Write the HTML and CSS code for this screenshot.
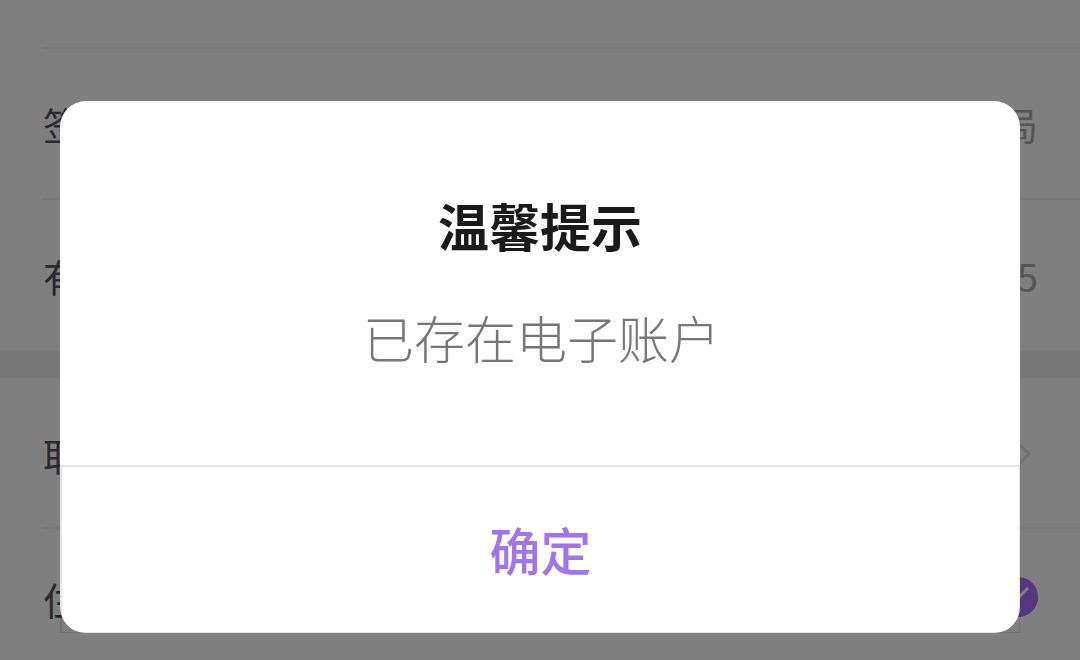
FILE: index.html
```html
<!DOCTYPE html>
<html lang="zh-CN">
<head>
    <meta charset="UTF-8">
    <title>温馨提示</title>
    <link rel="stylesheet" href="styles.css">
</head>
<body>
    <div class="page">
        <div class="group first">
            <div class="row">
                <span class="label">签</span>
                <span class="value">局</span>
            </div>
            <div class="row">
                <span class="label">有</span>
                <span class="value">5</span>
            </div>
        </div>
        <div class="group second">
            <div class="row">
                <span class="label">取</span>
                <svg class="chevron" width="14" height="24" viewBox="0 0 14 24">
                    <path d="M2 2l10 10L2 22" fill="none" stroke="#e2e2e2" stroke-width="3"/>
                </svg>
            </div>
            <div class="row">
                <span class="label">住</span>
                <svg class="check" width="40" height="40" viewBox="0 0 40 40">
                    <circle cx="20" cy="20" r="20" fill="#a86ff8"/>
                    <path d="M6 22l6 7L30 11" fill="none" stroke="#fff" stroke-width="3"/>
                </svg>
            </div>
        </div>
    </div>

    <div class="overlay">
        <div class="dialog">
            <div class="dialog-body">
                <h1 class="dialog-title">温馨提示</h1>
                <p class="dialog-msg">已存在电子账户</p>
            </div>
            <div class="dialog-footer">确定</div>
        </div>
    </div>
</body>
</html>
```

FILE: styles.css
```css
body {
    margin: 0;
    width: 1080px;
    height: 660px;
    overflow: hidden;
    font-family: "Noto Sans CJK SC", "Noto Sans", sans-serif;
    background-color: #fff;
}

.page {
    height: 660px;
    background-color: #fff;
}

.group {
    padding-left: 42px;
    background-color: #fff;
}

.group.first {
    padding-top: 47px;
    border-bottom: 27px solid #eee;
}

.row {
    display: flex;
    align-items: center;
    justify-content: space-between;
    height: 149px;
    padding-right: 42px;
    padding-left: 1px;
    border-top: 2px solid #f2f2f2;
}

.first .row:last-child {
    height: 151px;
}

.second .row:first-child {
    border-top: none;
    height: 146px;
    padding-top: 3px;
}

.second .row:last-child {
    height: 138px;
}

.label {
    font-size: 38px;
    font-weight: 400;
    color: #55535d;
}

.value {
    font-size: 38px;
    color: #aaa;
}

.check {
    margin-top: -2px;
}

.chevron {
    margin-right: 7px;
}

.overlay {
    position: fixed;
    top: 0;
    left: 0;
    width: 100%;
    height: 100%;
    display: flex;
    justify-content: center;
    padding-top: 101px;
    box-sizing: border-box;
    background-color: rgba(0, 0, 0, 0.5);
}

.dialog {
    display: flex;
    flex-direction: column;
    width: 960px;
    height: 532px;
    border-radius: 26px;
    background-color: #fff;
}

.dialog-body {
    height: 364px;
    text-align: center;
}

.dialog-title {
    margin: 0;
    padding-top: 88px;
    font-size: 51px;
    line-height: 72px;
    font-weight: 700;
    color: #1a1a1a;
}

.dialog-msg {
    margin: 0;
    padding: 40px 0 0 3px;
    font-size: 51px;
    line-height: 72px;
    font-weight: 300;
    color: #777;
}

.dialog-footer {
    flex: 1;
    display: flex;
    align-items: center;
    justify-content: center;
    padding-bottom: 2px;
    border: 1px solid rgba(0, 0, 0, 0.1);
    border-top-width: 2px;
    border-left-width: 2px;
    font-size: 51px;
    font-weight: 500;
    color: #a074ea;
}
```
